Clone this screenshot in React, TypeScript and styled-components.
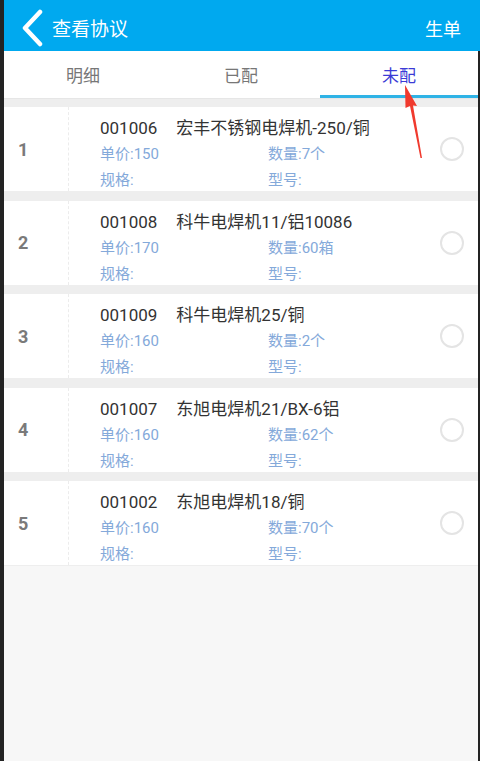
import styled, { createGlobalStyle } from 'styled-components'

const GlobalStyle = createGlobalStyle`
  html, body {
    margin: 0;
    padding: 0;
    background: #232323;
    font-family: Roboto, "Noto Sans CJK SC", sans-serif;
  }
`

const items = [
  { no: 1, code: '001006', name: '宏丰不锈钢电焊机-250/铜', price: 150, qty: '7个' },
  { no: 2, code: '001008', name: '科牛电焊机11/铝10086', price: 170, qty: '60箱' },
  { no: 3, code: '001009', name: '科牛电焊机25/铜', price: 160, qty: '2个' },
  { no: 4, code: '001007', name: '东旭电焊机21/BX-6铝', price: 160, qty: '62个' },
  { no: 5, code: '001002', name: '东旭电焊机18/铜', price: 160, qty: '70个' },
]

export default function App() {
  return (
    <>
      <GlobalStyle />
      <Screen>
        <Header>
          <BackButton>
            <svg width="24" height="38" viewBox="0 0 24 38">
              <path d="M20 3 L5 19 L20 35" fill="none" stroke="#fff" strokeWidth="4.5" strokeLinecap="round" strokeLinejoin="round" />
            </svg>
            <Title>查看协议</Title>
          </BackButton>
          <Action>生单</Action>
        </Header>
        <Body>
          <Tabs>
            <Tab>明细</Tab>
            <Tab>已配</Tab>
            <Tab active>未配</Tab>
          </Tabs>
          <List>
            {items.map((it) => (
              <Row key={it.no}>
                <Index>{it.no}</Index>
                <Info>
                  <NameLine>
                    <Code>{it.code}</Code>
                    <span>{it.name}</span>
                  </NameLine>
                  <Fields>
                    <span>单价:{it.price}</span>
                    <span>数量:{it.qty}</span>
                    <span>规格:</span>
                    <span>型号:</span>
                  </Fields>
                </Info>
                <Radio />
              </Row>
            ))}
          </List>
          <Arrow width="30" height="80" viewBox="0 0 30 80">
            <path d="M5 1 L17 22 L13 21.5 L22 74 L20.5 74 L10 22 L5.5 24 Z" fill="#f03a2e" />
          </Arrow>
        </Body>
      </Screen>
    </>
  )
}

const Screen = styled.div`
  width: 480px;
  height: 761px;
  display: flex;
  flex-direction: column;
  overflow: hidden;
`

const Header = styled.header`
  height: 51px;
  margin-left: 4px;
  padding: 0 19px 0 16px;
  background: #00a9ef;
  display: flex;
  align-items: center;
  justify-content: space-between;
  color: #fff;
  flex-shrink: 0;
`

const BackButton = styled.div`
  display: flex;
  align-items: center;
  gap: 8px;
  margin-top: 4px;
`

const Title = styled.span`
  font-size: 19px;
`

const Action = styled.span`
  font-size: 18px;
  margin-top: 4px;
`

const Body = styled.div`
  position: relative;
  flex: 1;
  margin: 0 2px 0 4px;
  background: #f7f7f7;
`

const Tabs = styled.nav`
  height: 47px;
  display: grid;
  grid-template-columns: repeat(3, 1fr);
  background: #fff;
  border-bottom: 1px solid #e6e6e6;
`

const Tab = styled.div<{ active?: boolean }>`
  display: flex;
  align-items: center;
  justify-content: center;
  font-size: 17px;
  color: ${(p) => (p.active ? '#3b3bd6' : '#777')};
  border-bottom: 3px solid ${(p) => (p.active ? '#2fb3e6' : 'transparent')};
  padding-top: 3px;
`

const List = styled.div`
  display: flex;
  flex-direction: column;
  gap: 9.5px;
  padding-top: 8px;
  background: #eeeeee;
  padding-bottom: 1px;
`

const Row = styled.div`
  height: 84px;
  background: #fff;
  display: flex;
  align-items: stretch;
`

const Index = styled.div`
  width: 65px;
  border-right: 1px dashed #ececec;
  display: flex;
  align-items: center;
  padding-left: 14px;
  box-sizing: border-box;
  font-size: 18px;
  font-weight: bold;
  color: #7a7a7a;
`

const Info = styled.div`
  flex: 1;
  padding: 8px 0 0 31px;
  display: flex;
  flex-direction: column;
`

const NameLine = styled.div`
  font-size: 17px;
  color: #333;
  height: 26px;
  line-height: 26px;
  white-space: nowrap;
`

const Code = styled.span`
  margin-right: 19px;
`

const Fields = styled.div`
  display: grid;
  grid-template-columns: 168px 1fr;
  grid-auto-rows: 26px;
  font-size: 15px;
  line-height: 26px;
  color: #84a9da;
`

const Radio = styled.div`
  width: 20px;
  height: 20px;
  border: 2px solid #e4e4e4;
  border-radius: 50%;
  align-self: center;
  margin-right: 14px;
`

const Arrow = styled.svg`
  position: absolute;
  left: 396px;
  top: 33px;
`
